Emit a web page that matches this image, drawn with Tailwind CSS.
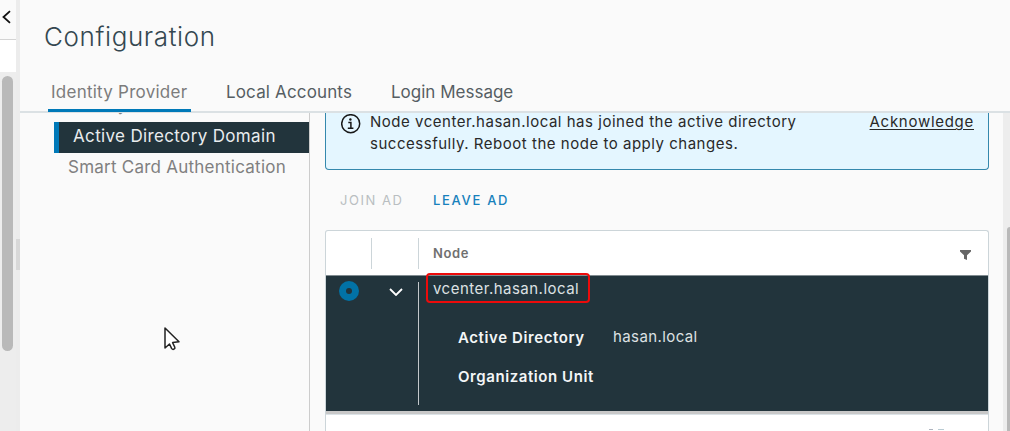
<!DOCTYPE html>
<html lang="en">
<head>
<meta charset="utf-8">
<title>Configuration</title>
<script src="https://cdn.jsdelivr.net/npm/@tailwindcss/browser@4"></script>
</head>
<body class="relative flex h-[431px] w-[1010px] overflow-hidden bg-[#fafafa] font-['Inter','Liberation_Sans',sans-serif] text-[#344750]">
  <!-- Collapsed navigator -->
  <aside class="flex w-4 shrink-0 flex-col">
    <div class="h-10 border-b border-[#d4d4d4] pt-2.5">
      <svg class="ml-[2px] h-[14px] w-[9px]" viewBox="0 0 9 14" fill="none" stroke="#111" stroke-width="1.8"><path d="M8 1.2 1.5 7 8 12.8"/></svg>
    </div>
    <div class="h-8 bg-white"></div>
    <div class="flex-1 bg-[#ededed] pt-1 pl-[2px]"><div class="h-[275px] w-[11px] rounded-full bg-[#b9b9b9]"></div></div>
  </aside>
  <div class="w-1 shrink-0 bg-[#ececec] pt-[239px]"><div class="h-[31px] bg-[#d8d8d8]"></div></div>

  <main class="flex min-w-0 flex-1 flex-col">
    <h1 class="h-[72px] pt-[18px] pl-6 text-[26px] leading-[37px] font-light whitespace-nowrap"><span class="tracking-[0.6px]">Configuration</span></h1>
    <nav class="flex h-[41px] shrink-0 border-b-2 border-[#dbe1e4] pl-7 text-[17px] leading-[41px] whitespace-nowrap text-[#565e63]">
      <div class="mr-[35px] h-10 w-[143px] border-b-[3px] border-[#0079b8] pl-[3px] text-[#7c7c7c]"><span class="tracking-[0.25px]">Identity Provider</span></div>
      <div class="w-[165px]"><span class="tracking-[0.15px]">Local Accounts</span></div>
      <div><span>Login Message</span></div>
    </nav>

    <div class="flex min-h-0 flex-1">
      <div class="w-[290px] shrink-0 overflow-hidden border-r border-[#ccc] pl-[34px] text-[17px] whitespace-nowrap text-[#808080]">
        <div class="flex h-[9px] items-end overflow-hidden pl-[14px]"><span class="mb-[7px] text-[16px] leading-5 tracking-[0.3px]">Identity</span></div>
        <div class="h-[31px] border-l-[5px] border-[#0079b8] bg-[#22343c] pl-[14px] leading-[29px] text-[#e9ecee]"><span class="tracking-[0.35px]">Active Directory Domain</span></div>
        <div class="pl-[14px] leading-[29px]"><span class="tracking-[0.24px]">Smart Card Authentication</span></div>
      </div>

      <section class="flex min-w-0 flex-1 flex-col pr-[14px] pl-[15px]">
        <div class="flex h-[57px] shrink-0 rounded-b-[4px] border border-t-0 border-[#3488ad] bg-[#e4f6ff] pr-[14px] pl-[15px] text-[15px] leading-[22px] whitespace-nowrap text-[#292929]">
          <svg class="mt-[1px] mr-[8px] h-5 w-5 shrink-0" viewBox="0 0 20 20" fill="none" stroke="#181818"><circle cx="9.7" cy="9.7" r="9" stroke-width="1.5"/><circle cx="9.4" cy="5.5" r="1.2" fill="#181818" stroke="none"/><path stroke-width="1.5" d="M7.3 8.6h2.6v5.3M6.8 14.2h5.6"/></svg>
          <p class="-mt-[2px] ml-px flex-1"><span class="tracking-[0.52px]">Node vcenter.hasan.local has joined the active directory</span><br><span class="tracking-[0.52px]">successfully. Reboot the node to apply changes.</span></p>
          <a class="-mt-[2px] underline decoration-1 underline-offset-2"><span class="tracking-[0.72px]">Acknowledge</span></a>
        </div>
        <div class="flex h-[60px] shrink-0 pl-[15px] text-[13px] leading-[61px] whitespace-nowrap">
          <div class="w-[93px] text-[#b9bec1]"><span class="tracking-[1.55px]">JOIN AD</span></div>
          <div class="font-medium text-[#1781bc]"><span class="tracking-[1.7px]">LEAVE AD</span></div>
        </div>

        <div class="flex min-h-0 flex-1 flex-col rounded-t-[3px] border border-b-0 border-[#ccd5d9] bg-white">
          <div class="flex h-[45px] shrink-0 items-center border-b border-[#808b90] text-[13px] font-semibold text-[#707070]">
            <div class="h-[31px] w-[46px] border-r border-[#ccd5d9]"></div>
            <div class="h-[31px] w-[47px] border-r border-[#ccd5d9]"></div>
            <div class="flex-1 pl-[14px] leading-[44px]"><span class="tracking-[0.6px]">Node</span></div>
            <svg class="mt-[4px] mr-[17px] h-[10px] w-[11px]" viewBox="0 0 11 10" fill="#666"><path d="M0 0h11v1.5L7 5.2V10L4 8.7V5.2L0 1.5z"/></svg>
          </div>
          <div class="flex h-[135px] shrink-0 bg-[#22343c] text-[15px] whitespace-nowrap text-[#dde1e3]">
            <div class="w-[46px] shrink-0 pt-[5px] pl-[13px]"><div class="flex h-5 w-5 items-center justify-center rounded-full bg-[#0272a6]"><div class="h-[6px] w-[6px] rounded-full bg-[#22343c]"></div></div></div>
            <div class="my-[6px] w-[47px] shrink-0 border-r border-[#c3c8cb] pt-[6px] pl-[17px]"><svg class="h-[8px] w-[14px]" viewBox="0 0 14 8" fill="none" stroke="#fff" stroke-width="1.8"><path d="m1 1 6 6 6-6"/></svg></div>
            <div class="min-w-0 flex-1">
              <div class="-mt-[3px] ml-[7px] flex h-[30px] w-[164px] items-center rounded-[4px] border-2 border-[#ed0b0b] pt-[3px] pl-[5px]"><span class="tracking-[0.48px]">vcenter.hasan.local</span></div>
              <dl class="mt-[23px] grid grid-cols-[155px_1fr] pl-[39px] leading-[24px]">
                <dt class="h-[39px] font-semibold text-[#f4f6f7]"><span class="tracking-[0.6px]">Active Directory</span></dt>
                <dd class="-mt-px"><span class="tracking-[0.4px]">hasan.local</span></dd>
                <dt class="font-semibold text-[#f4f6f7]"><span class="tracking-[0.57px]">Organization Unit</span></dt>
              </dl>
            </div>
          </div>
          <div class="h-[4px] shrink-0 border-b border-[#dce3e7] bg-[#c8c8c8]"></div>
          <div class="h-[15px] overflow-hidden pt-[14px] pl-[603px]"><div class="flex gap-[5px]"><i class="h-px w-[4px] bg-[#aeb4bf]"></i><i class="h-px w-[6px] bg-[#b9cbd3]"></i></div></div>
        </div>
      </section>
      <div class="w-[7px] shrink-0 bg-[#ededed] pt-[114px] pl-[4px]"><div class="h-full rounded-tl-[4px] bg-[#b9b9b9]"></div></div>
    </div>
  </main>

  <svg class="absolute top-[326px] left-[163px] h-[26px] w-[18px]" viewBox="0 0 18 26" fill="#fff" stroke="#222" stroke-width="1.5" stroke-linejoin="round"><path d="M2 2v20l4.5-4 2.2 4.6c1.3 1.6 3.7.4 3.1-1.3L9.6 16.6 16 15.8z"/></svg>
</body>
</html>
